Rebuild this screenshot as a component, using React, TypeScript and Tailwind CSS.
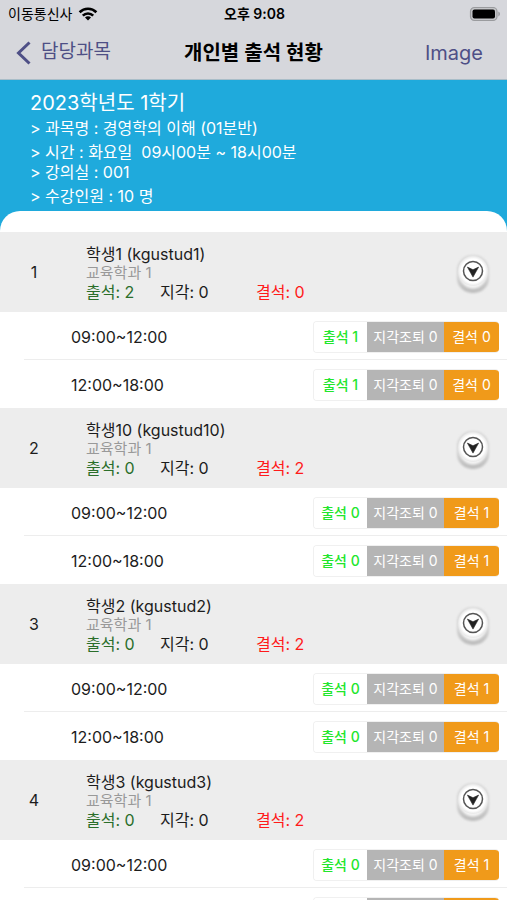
import React from 'react';

interface Session {
  time: string;
  present: number;
  late: number;
  absent: number;
}

interface Student {
  no: number;
  name: string;
  id: string;
  major: string;
  present: number;
  late: number;
  absent: number;
  sessions: Session[];
}

const makeSessions = (present: number, absent: number): Session[] => [
  { time: '09:00~12:00', present, late: 0, absent },
  { time: '12:00~18:00', present, late: 0, absent },
];

const students: Student[] = [
  { no: 1, name: '학생1', id: 'kgustud1', major: '교육학과 1', present: 2, late: 0, absent: 0, sessions: makeSessions(1, 0) },
  { no: 2, name: '학생10', id: 'kgustud10', major: '교육학과 1', present: 0, late: 0, absent: 2, sessions: makeSessions(0, 1) },
  { no: 3, name: '학생2', id: 'kgustud2', major: '교육학과 1', present: 0, late: 0, absent: 2, sessions: makeSessions(0, 1) },
  { no: 4, name: '학생3', id: 'kgustud3', major: '교육학과 1', present: 0, late: 0, absent: 2, sessions: makeSessions(0, 1) },
];

const WifiIcon = () => (
  <svg viewBox="0 0 20 14" className="w-5 h-3.5" aria-hidden="true">
    <g fill="none" stroke="#000" strokeWidth="2.6">
      <path d="M1.6 5.2a12 12 0 0 1 16.8 0" />
      <path d="M4.8 8.6a7.4 7.4 0 0 1 10.4 0" />
    </g>
    <path d="M10 13.6 7 10.6a4.2 4.2 0 0 1 6 0Z" />
  </svg>
);

const BatteryIcon = () => (
  <svg viewBox="0 0 32 16" className="w-8 h-4" aria-hidden="true">
    <rect x="1.5" y="1.5" width="26.5" height="13" rx="4" fill="#c4c5c8" stroke="#9a9b9e" strokeWidth="1.2" />
    <rect x="3.5" y="3.5" width="22.5" height="9" rx="2" />
    <path d="M29.3 5.6c2.2.8 2.2 4 0 4.8Z" fill="#9a9b9e" />
  </svg>
);

const StatusBar = () => (
  <div className="grid grid-cols-3 items-center h-7 pl-2 pr-1.5">
    <div className="flex items-center gap-1.5 text-sm">
      <span>이동통신사</span>
      <WifiIcon />
    </div>
    <span className="text-sm font-semibold text-center">오후 9:08</span>
    <div className="flex justify-end">
      <BatteryIcon />
    </div>
  </div>
);

const NavBar = () => (
  <nav className="grid grid-cols-[1fr_auto_1fr] items-center h-[51px] px-4 pb-0.5 text-xl text-[#4e4f86]">
    <button type="button" className="flex items-center gap-2.5 text-[19px]">
      <svg viewBox="0 0 15 24" className="w-[15px] h-6" aria-hidden="true">
        <path d="M13.5 1.5 2.5 12l11 10.5" fill="none" stroke="currentColor" strokeWidth="3" />
      </svg>
      담당과목
    </button>
    <h1 className="font-semibold text-black">개인별 출석 현황</h1>
    <button type="button" className="justify-self-end mr-2">Image</button>
  </nav>
);

const CourseInfo = () => (
  <section className="px-[30px] pt-2 pb-[5px] text-white">
    <h2 className="text-xl leading-[30px]">2023학년도 1학기</h2>
    <div className="flex flex-col gap-1 text-base leading-5">
      <p>&gt; 과목명 : 경영학의 이해 (01분반)</p>
      <p className="whitespace-pre">&gt; 시간 : 화요일  09시00분 ~ 18시00분</p>
    </div>
    <div className="flex flex-col gap-1 text-base leading-5">
      <p>&gt; 강의실 : 001</p>
      <p>&gt; 수강인원 : 10 명</p>
    </div>
  </section>
);

const ToggleButton = ({ label }: { label: string }) => (
  <button type="button" aria-label={label} className="w-10 h-12">
    <svg viewBox="0 0 40 48" className="w-10 h-12" aria-hidden="true">
      <defs>
        <linearGradient id="knobSide" x1="0" y1="0" x2="0" y2="1">
          <stop offset="0" stopColor="#d8d8d8" />
          <stop offset="0.6" stopColor="#cfcfcf" />
          <stop offset="1" stopColor="#bcbcbc" />
        </linearGradient>
        <radialGradient id="knobTop">
          <stop offset="0.8" stopColor="#fff" />
          <stop offset="1" stopColor="#e6e6e6" />
        </radialGradient>
        <filter id="knobSoft" x="-20%" y="-20%" width="140%" height="140%">
          <feGaussianBlur stdDeviation="1.2" />
        </filter>
      </defs>
      <rect x="4" y="7" width="32" height="38" rx="15" fill="url(#knobSide)" filter="url(#knobSoft)" />
      <ellipse cx="20" cy="24.5" rx="14.5" ry="16" fill="#f4f4f4" filter="url(#knobSoft)" />
      <circle cx="20" cy="23" r="15" fill="url(#knobTop)" />
      <circle cx="20" cy="23" r="9.5" fill="#fff" stroke="#555" strokeWidth="1.5" />
      <path d="M14.4 19.1 20 21.7l5.6-2.6L20 29.1Z" fill="#222" stroke="#222" strokeWidth="0.6" />
    </svg>
  </button>
);

const SessionRow: React.FC<{ session: Session }> = ({ session }) => {
  const { time, present, late, absent } = session;
  return (
    <li className="group">
      <div className="flex items-center justify-between h-12 pl-[71px] pr-2 pt-0.5">
        <span className="text-base">{time}</span>
        <div className="flex h-8 rounded border border-r-0 border-[#f0f0f0] overflow-hidden text-sm leading-[30px] text-center text-white">
          <span className="w-[53px] bg-white text-[#22e62c] font-medium">출석 {present}</span>
          <span className="w-[77px] bg-[#b5b5b5]">지각조퇴 {late}</span>
          <span className="w-[55px] bg-[#f09a1a]">결석 {absent}</span>
        </div>
      </div>
      <div className="h-px -mt-px ml-6 bg-[#ededed] group-last:hidden" />
    </li>
  );
};

const StudentCard: React.FC<{ student: Student }> = ({ student }) => {
  const { no, name, id, major, present, late, absent, sessions } = student;
  return (
    <li>
      <div className="flex items-center h-20 pr-3.5 bg-[#ededed] text-base text-[#1c1c1c]">
        <span className="w-[68px] text-center">{no}</span>
        <div className="flex-1 pt-px pl-[18px] leading-[18px]">
          <p>{name} ({id})</p>
          <p className="text-[#999999] text-[15px] leading-5">{major}</p>
          <div className="flex">
            <span className="w-[74px] text-[#2a6e2a]">출석: {present}</span>
            <span className="w-24">지각: {late}</span>
            <span className="text-[#ff1a1a]">결석: {absent}</span>
          </div>
        </div>
        <ToggleButton label={`${name} 접기`} />
      </div>
      <ul className="bg-white text-[#1c1c1c]">
        {sessions.map((session) => (
          <SessionRow key={session.time} session={session} />
        ))}
      </ul>
    </li>
  );
};

const App: React.FC = () => {
  return (
    <div className="h-screen overflow-hidden flex flex-col bg-[#1faadc] text-black font-['Inter','Noto_Sans_CJK_KR',sans-serif]">
      <header className="shrink-0 bg-[#d6d7dc] border-b border-[#a9bdc8]">
        <StatusBar />
        <NavBar />
      </header>
      <CourseInfo />
      <main className="flex-1 min-h-0 overflow-hidden rounded-t-[20px] bg-white pt-[21px]">
        <ul>
          {students.map((student) => (
            <StudentCard key={student.no} student={student} />
          ))}
        </ul>
      </main>
    </div>
  );
};

export default App;
